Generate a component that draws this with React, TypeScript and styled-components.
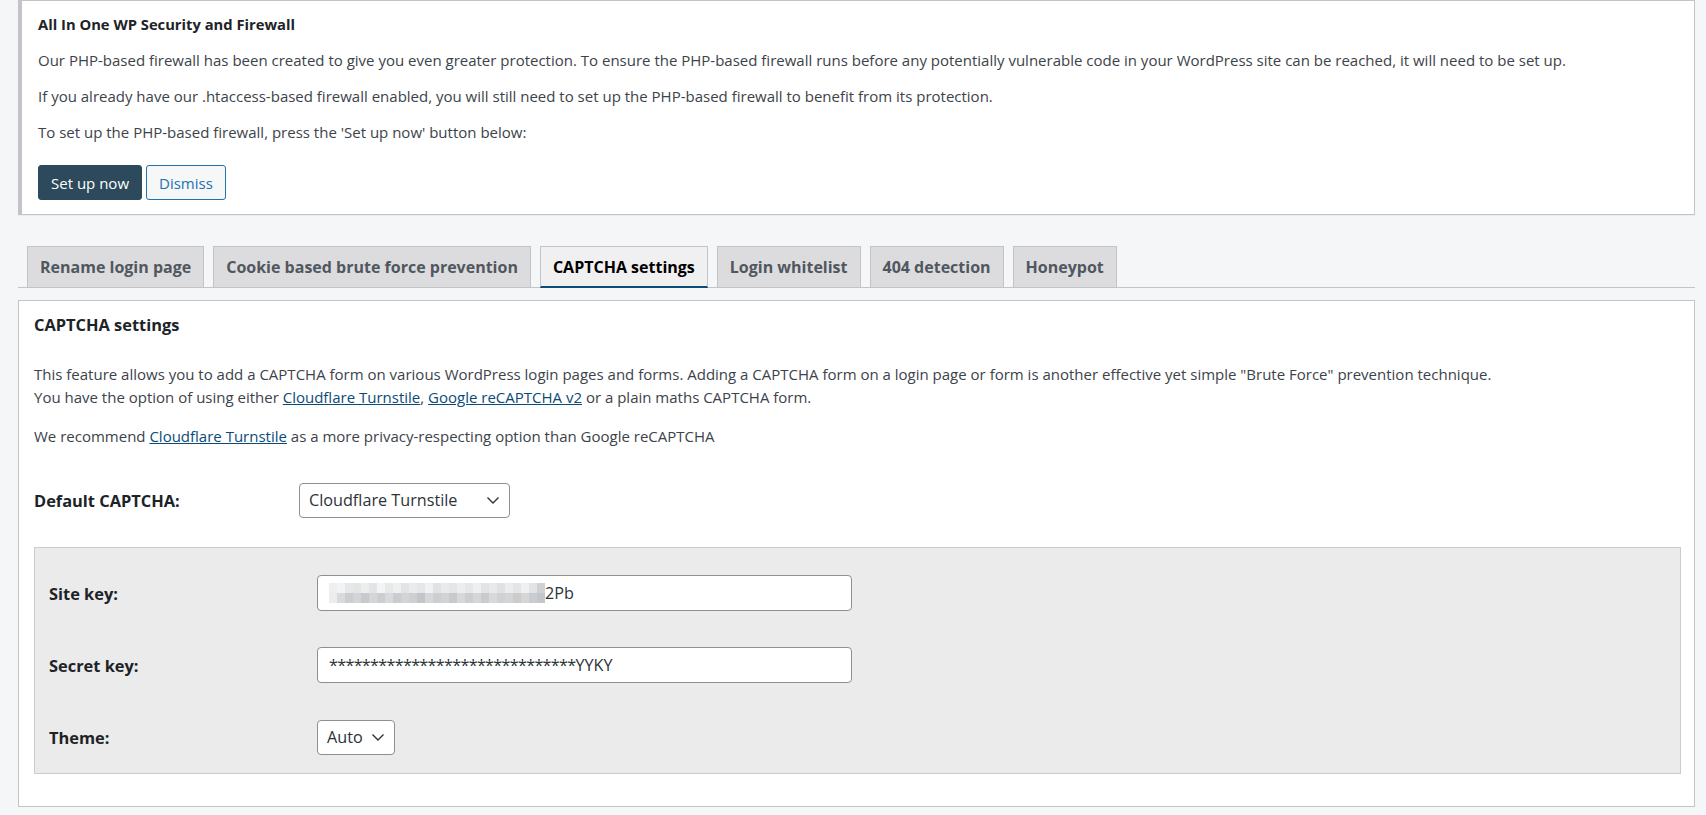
import styled, { createGlobalStyle } from "styled-components";

const GlobalStyle = createGlobalStyle`
  body {
    margin: 0;
    background: #f5f6f7;
    font-family: "Open Sans", "Noto Sans", sans-serif;
    color: #3c434a;
  }
`;

const Page = styled.div`
  padding: 0 11px 12px 18px;
`;

const Notice = styled.div`
  background: #fff;
  border: 1px solid #c3c4c7;
  border-left: 4px solid #c3c4c7;
  padding: 13px 18px 14px 16px;
  box-shadow: 0 1px 1px rgba(0, 0, 0, 0.04);
`;

const NoticeTitle = styled.p`
  margin: 0 0 16px;
  font-size: 14.75px;
  font-weight: 700;
  color: #1d2327;
`;

const NoticeText = styled.p`
  margin: 0 0 15px;
  font-size: 15px;
  line-height: 21px;
`;

const ButtonRow = styled.div`
  display: flex;
  gap: 4px;
  margin-top: 22px;
`;

const Button = styled.button<{ $primary?: boolean }>`
  height: 35px;
  padding: 0 12px;
  border-radius: 3px;
  font-family: inherit;
  font-size: 15px;
  cursor: pointer;
  border: 1px solid ${(p) => (p.$primary ? "#2c4a5b" : "#2271b1")};
  background: ${(p) => (p.$primary ? "#2c4a5b" : "#f6f7f7")};
  color: ${(p) => (p.$primary ? "#fff" : "#2271b1")};
`;

const TabBar = styled.nav`
  display: flex;
  gap: 9px;
  margin-top: 31px;
  padding-left: 9px;
  border-bottom: 1px solid #c3c4c7;
`;

const Tab = styled.a<{ $active?: boolean }>`
  display: flex;
  align-items: center;
  height: 42px;
  box-sizing: border-box;
  padding: 0 12px;
  margin-bottom: -1px;
  font-size: 16px;
  font-weight: 700;
  text-decoration: none;
  border: 1px solid #c3c4c7;
  border-bottom: ${(p) => (p.$active ? "2px solid #0a4b78" : "1px solid #c3c4c7")};
  background: ${(p) => (p.$active ? "#f0f0f1" : "#dcdcde")};
  color: ${(p) => (p.$active ? "#000" : "#50575e")};
`;

const Panel = styled.section`
  margin-top: 12px;
  background: #fff;
  border: 1px solid #c3c4c7;
  padding: 13px 13px 32px 15px;
`;

const PanelTitle = styled.h2`
  margin: 0 0 27px;
  font-size: 16.4px;
  line-height: 22px;
  font-weight: 700;
  color: #1d2327;
`;

const Para = styled.p`
  margin: 0 0 16px;
  font-size: 15px;
  line-height: 23px;
`;

const Link = styled.a`
  color: #0a4b78;
  text-decoration: underline;
`;

const FieldRow = styled.div`
  display: grid;
  grid-template-columns: 265px 1fr;
  align-items: center;
  min-height: 72px;
`;

const Label = styled.label`
  font-size: 16.4px;
  font-weight: 700;
  color: #1d2327;
`;

const Select = styled.div<{ $width: number }>`
  display: flex;
  align-items: center;
  justify-content: space-between;
  box-sizing: border-box;
  width: ${(p) => p.$width}px;
  height: 35px;
  padding: 0 8px 0 9px;
  background: #fff;
  border: 1px solid #8c8f94;
  border-radius: 4px;
  font-size: 16.2px;
  color: #2c3338;
`;

const KeyBox = styled.div`
  margin-top: 11px;
  background: #ebebeb;
  border: 1px solid #ccc;
  padding: 9px 14px 0;
`;

const KeyRow = styled(FieldRow)`
  grid-template-columns: 268px 1fr;
`;

const TextField = styled.div`
  display: flex;
  align-items: center;
  box-sizing: border-box;
  width: 535px;
  height: 36px;
  padding: 0 9px 0 11px;
  background: #fff;
  border: 1px solid #8c8f94;
  border-radius: 4px;
  font-size: 16.2px;
  color: #2c3338;
`;

const Masked = styled.span`
  letter-spacing: -0.7px;
`;

const BlurSvg = styled.svg`
  display: block;
  flex: none;
`;

// pixelated (redacted) part of the site key
const topRow = ["#eeeff0", "#f2f3f4", "#e6e7e9", "#e4e5e7", "#eceded", "#e3e4e6", "#f3f4f5", "#e7e8ea", "#eeefef", "#e2e3e5", "#eaebec", "#e5e6e8", "#f0f1f2", "#e1e2e4", "#e9eaeb", "#e3e5e7", "#ecedee", "#e6e7e9", "#eeeff0", "#e2e3e5", "#e8e9eb", "#e0e1e3", "#ebeced", "#e4e5e7", "#eef0f1", "#e2e3e5", "#cfd1d3"];
const bottomRow = ["#eceded", "#d9dadc", "#cbcdd0", "#d2d4d6", "#c6c9cd", "#d5d6d8", "#cbced1", "#d8d9db", "#c9ccd0", "#d3d4d6", "#cdcfd2", "#c2c6ca", "#d6d7d9", "#cccfd2", "#d1d3d5", "#c7cacd", "#d7d8d9", "#ccced1", "#d4d6d8", "#c9cccf", "#d9d9da", "#cfd2d5", "#d3d4d6", "#caccce", "#d6d6d7", "#c9ccd0", "#c4c7ca"];

const Redacted = () => (
  <BlurSvg width={216} height={20} viewBox="0 0 216 20">
    {topRow.map((c, i) => (
      <rect key={`t${i}`} x={i * 8} y={0} width={8} height={10} fill={c} />
    ))}
    {bottomRow.map((c, i) => (
      <rect key={`b${i}`} x={i * 8} y={10} width={8} height={10} fill={c} />
    ))}
  </BlurSvg>
);

const Chevron = () => (
  <svg width="16" height="16" viewBox="0 0 16 16" fill="none">
    <path d="M2.5 5.5L8 11l5.5-5.5" stroke="#2c3338" strokeWidth="1.4" />
  </svg>
);

const tabs = [
  "Rename login page",
  "Cookie based brute force prevention",
  "CAPTCHA settings",
  "Login whitelist",
  "404 detection",
  "Honeypot",
];

export default function App() {
  return (
    <>
      <GlobalStyle />
      <Page>
        <Notice>
          <NoticeTitle>All In One WP Security and Firewall</NoticeTitle>
          <NoticeText>
            Our PHP-based firewall has been created to give you even greater protection. To ensure the PHP-based
            firewall runs before any potentially vulnerable code in your WordPress site can be reached, it will need
            to be set up.
          </NoticeText>
          <NoticeText>
            If you already have our .htaccess-based firewall enabled, you will still need to set up the PHP-based
            firewall to benefit from its protection.
          </NoticeText>
          <NoticeText>To set up the PHP-based firewall, press the 'Set up now' button below:</NoticeText>
          <ButtonRow>
            <Button $primary>Set up now</Button>
            <Button>Dismiss</Button>
          </ButtonRow>
        </Notice>

        <TabBar>
          {tabs.map((t) => (
            <Tab key={t} href="#" $active={t === "CAPTCHA settings"}>
              {t}
            </Tab>
          ))}
        </TabBar>

        <Panel>
          <PanelTitle>CAPTCHA settings</PanelTitle>
          <Para>
            This feature allows you to add a CAPTCHA form on various WordPress login pages and forms. Adding a CAPTCHA
            form on a login page or form is another effective yet simple "Brute Force" prevention technique.
            <br />
            You have the option of using either <Link href="#">Cloudflare Turnstile</Link>,{" "}
            <Link href="#">Google reCAPTCHA v2</Link> or a plain maths CAPTCHA form.
          </Para>
          <Para>
            We recommend <Link href="#">Cloudflare Turnstile</Link> as a more privacy-respecting option than Google
            reCAPTCHA
          </Para>

          <FieldRow>
            <Label>Default CAPTCHA:</Label>
            <Select $width={211}>
              Cloudflare Turnstile
              <Chevron />
            </Select>
          </FieldRow>

          <KeyBox>
            <KeyRow>
              <Label>Site key:</Label>
              <TextField>
                <Redacted />
                2Pb
              </TextField>
            </KeyRow>
            <KeyRow>
              <Label>Secret key:</Label>
              <TextField>
                <Masked>******************************</Masked>YYKY
              </TextField>
            </KeyRow>
            <KeyRow>
              <Label>Theme:</Label>
              <Select $width={78}>
                Auto
                <Chevron />
              </Select>
            </KeyRow>
          </KeyBox>
        </Panel>
      </Page>
    </>
  );
}
